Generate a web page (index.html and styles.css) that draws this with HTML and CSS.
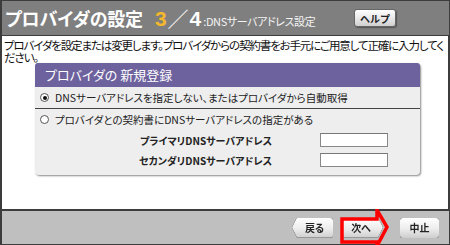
FILE: index.html
```html
<!DOCTYPE html>
<html lang="ja">
<head>
<meta charset="utf-8">
<link rel="stylesheet" href="styles.css">
</head>
<body>
<div class="window">
  <header class="head">
    <h1 class="title">プロバイダの設定</h1>
    <span class="step"><span class="cur">3</span><span class="sep">／</span><span class="tot">4</span></span>
    <span class="sub">:DNSサーバアドレス設定</span>
    <button class="help">ヘルプ</button>
  </header>
  <main class="body">
    <p class="intro">プロバイダを設定または変更します。プロバイダからの契約書をお手元にご用意して正確に入力してください。</p>
    <section class="panel">
      <div class="panel-head">プロバイダの 新規登録</div>
      <label class="row first"><span class="radio on"></span>DNSサーバアドレスを指定しない、またはプロバイダから自動取得</label>
      <label class="row second"><span class="radio"></span>プロバイダとの契約書にDNSサーバアドレスの指定がある</label>
      <div class="field"><span class="flabel">プライマリDNSサーバアドレス</span><span class="input"></span></div>
      <div class="field last"><span class="flabel">セカンダリDNSサーバアドレス</span><span class="input"></span></div>
    </section>
  </main>
  <footer class="foot">
    <span class="btn back"><span class="face">戻る</span></span>
    <span class="btn next"><span class="face">次へ</span></span>
    <span class="btn cancel"><span class="face">中止</span></span>
    <svg class="mark" width="52" height="40" viewBox="0 0 52 40"><path d="M3 10 H38 V1 L48 18 L38 37 V33 H3 Z" fill="none" stroke="#ff0000" stroke-width="3.5" stroke-linejoin="miter"/></svg>
  </footer>
</div>
</body>
</html>
```

FILE: styles.css
```css
* { box-sizing: border-box; margin: 0; padding: 0; }
body { width: 450px; height: 245px; overflow: hidden; background: #fff; font-family: "Noto Sans CJK JP", "Noto Sans", sans-serif; font-feature-settings: "palt"; }
.window { width: 450px; height: 245px; border: 1px solid #3c3c3c; border-left-width: 2px; display: flex; flex-direction: column; }
.head { height: 35px; flex: none; background: #7f7f7f; border-bottom: 1px solid #3c3c3c; display: flex; align-items: center; padding-left: 3px; color: #fff; }
.title { font-size: 18px; font-weight: 700; letter-spacing: -0.2px; line-height: 1; }
.step { margin-left: 12px; font-size: 21px; font-weight: 700; line-height: 1; font-family: "Liberation Sans", sans-serif; display: flex; align-items: center; }
.cur { color: #f2b72c; }
.sep { font-family: "Noto Sans CJK JP", sans-serif; font-weight: 400; font-size: 21px; margin: 0 1px; }
.sub { font-size: 11px; margin-left: 2px; margin-top: 5px; color: #f4f4f4; letter-spacing: -0.4px; }
.help { margin-left: auto; margin-right: 53px; width: 42px; height: 18px; border: 1px solid #666; border-radius: 3px; background: linear-gradient(#ffffff, #e4e4e4 60%, #cfcfcf); font: 700 10px "Noto Sans CJK JP", sans-serif; color: #222; box-shadow: 1px 1px 1px #555; }
.body { flex: 1; background: #fff; padding: 3px 0 0 2px; border-right: 1px solid #3c3c3c; }
.intro { font-size: 11.5px; line-height: 12px; color: #111; letter-spacing: -1.12px; }
.panel { margin: 0 0 0 31px; width: 385px; background: #eeeeee; border-radius: 4px; box-shadow: 1px 1px 2px #8a8a8a; padding-bottom: 5px; }
.panel-head { height: 24px; background: #6d629e; color: #fff; font-size: 13px; line-height: 24px; padding-left: 10px; border-radius: 3px 3px 0 0; }
.row { display: flex; align-items: center; font-size: 10.5px; color: #222; padding-left: 5px; height: 21px; }
.row.first { border-bottom: 1px solid #444; height: 22px; }
.radio { width: 9px; height: 9px; border: 1px solid #555; border-radius: 50%; background: #fff; margin-right: 6px; position: relative; flex: none; }
.radio.on::after { content: ""; position: absolute; left: 1.5px; top: 1.5px; width: 4px; height: 4px; border-radius: 50%; background: #111; }
.field { display: flex; align-items: center; height: 20px; }
.flabel { width: 237px; text-align: right; font-size: 10px; font-weight: 700; color: #222; }
.input { margin-left: 48px; width: 68px; height: 14px; background: #fff; border: 1px solid #888; border-top-color: #777; }
.foot { height: 35px; flex: none; background: #bfbfbf; border-top: 2px solid #3c3c3c; display: flex; align-items: center; justify-content: flex-end; padding-right: 10px; position: relative; }
.btn { display: block; height: 20px; filter: drop-shadow(0 0 0.6px #555) drop-shadow(0 0 0.3px #555); }
.face { display: flex; align-items: center; justify-content: center; height: 20px; background: linear-gradient(#ffffff, #ececec 55%, #cdcdcd); font-size: 10px; font-weight: 700; color: #222; }
.back .face { width: 41px; clip-path: polygon(5px 0, 100% 0, 100% 100%, 5px 100%, 0 50%); border-radius: 0 3px 3px 0; padding-left: 4px; }
.next { margin-left: 10px; }
.next .face { width: 40px; clip-path: polygon(0 0, 35px 0, 100% 50%, 35px 100%, 0 100%); border-radius: 3px 0 0 3px; padding-right: 4px; }
.cancel { margin-left: 17px; }
.cancel .face { width: 39px; border-radius: 3px; }
.mark { position: absolute; left: 337px; top: -2px; }
```
